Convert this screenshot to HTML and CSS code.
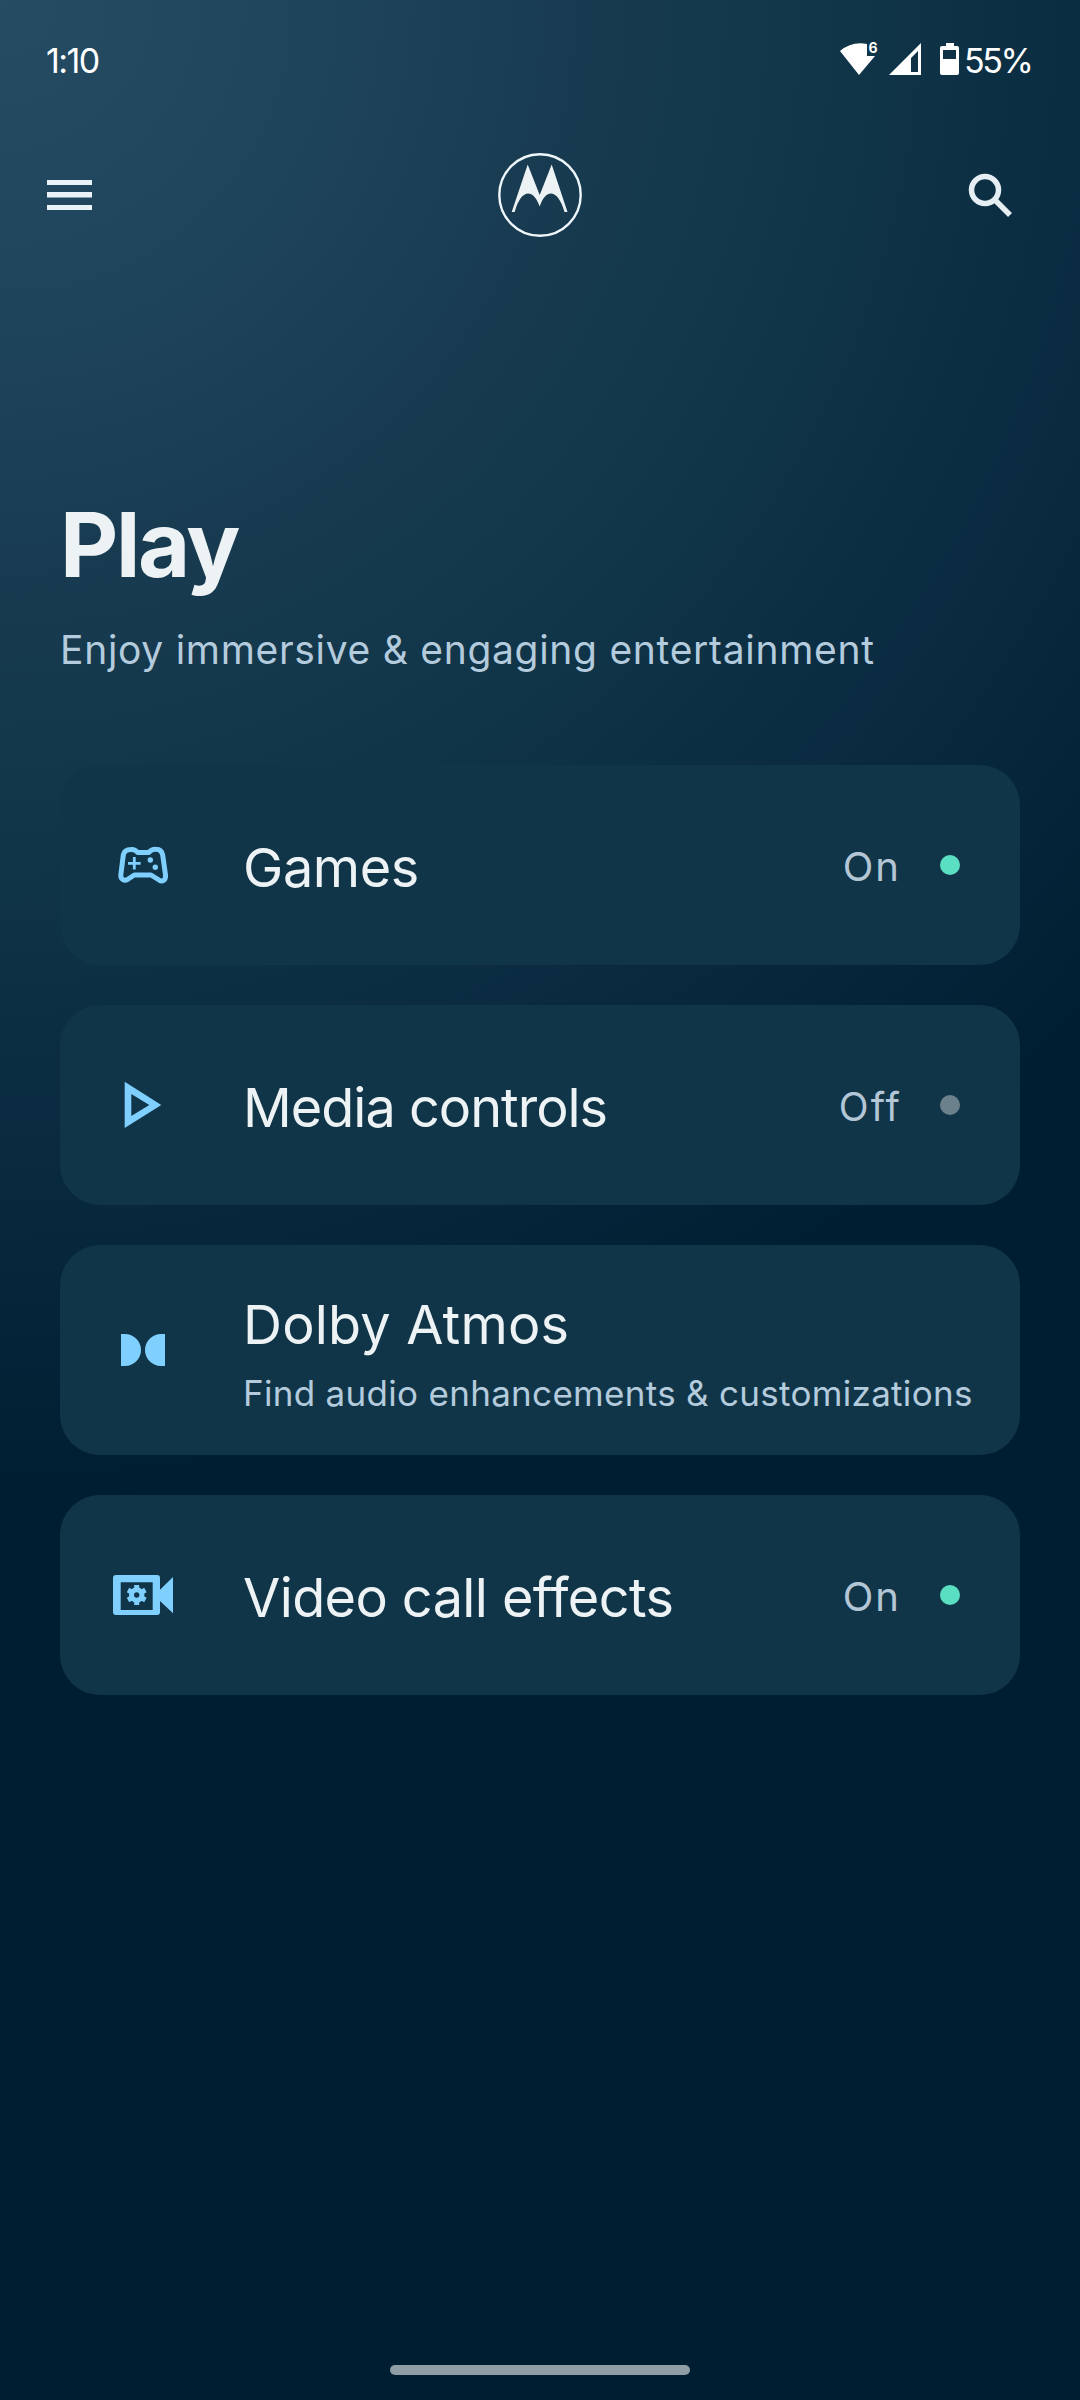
FILE: index.html
```html
<!DOCTYPE html>
<html lang="en">
<head>
<meta charset="utf-8">
<title>Play</title>
<link rel="stylesheet" href="styles.css">
</head>
<body>
<div class="screen">
  <header class="status">
    <span class="clock">1:10</span>
    <div class="status-right">
      <svg class="wifi" width="38" height="34" viewBox="0 0 38 34"><path fill="#fff" d="M0 8Q12-2 27 1V13H35L19 32Z"/><text class="wifi-gen" x="28.500" y="10">6</text></svg>
      <svg class="signal" width="32" height="32" viewBox="0 0 32 32"><path fill="#fff" fill-rule="evenodd" d="M0 32L32 0V32ZM22 15V29H29V8Z"/></svg>
      <svg class="battery" width="19" height="32" viewBox="0 0 19 32"><path fill="#fff" fill-rule="evenodd" d="M6 0H14V3H17Q19 3 19 5V30Q19 32 17 32H2Q0 32 0 30V5Q0 3 2 3H6ZM3 7V16H16V7Z"/></svg>
      <span class="percent">55%</span>
    </div>
  </header>
  <nav class="bar">
    <svg class="menu" width="46" height="32" viewBox="0 0 46 32"><path fill="#e9f2f6" d="M0 1H45V6H0ZM0 13H45V18.500H0ZM0 26H45V31H0Z"/></svg>
    <svg class="logo" width="84" height="84" viewBox="0 0 84 84"><circle cx="42" cy="42" r="40.700" fill="none" stroke="#edf7fc" stroke-width="2.400"/><path fill="#edf3f5" d="M29.700 11.500L41.700 42L53.700 11.500L69.500 59H66.500C60 36 48 35 41.700 53.500C35 35 23 36 16.700 59H13.700Z"/></svg>
    <svg class="search" width="46" height="46" viewBox="0 0 46 46"><circle cx="17" cy="17" r="13.500" fill="none" stroke="#e5eef3" stroke-width="5.500"/><path stroke="#e5eef3" stroke-width="5.500" d="M26.500 26.500L42 42"/></svg>
  </nav>
  <main class="content">
    <h1 class="title">Play</h1>
    <p class="subtitle">Enjoy immersive &amp; engaging entertainment</p>
    <section class="cards">
      <article class="card">
        <svg class="icon" width="70" height="60" viewBox="0 0 70 60"><path fill="none" stroke="#7fd0ff" stroke-width="5" stroke-linejoin="round" d="M23 14.500C26 14 28 15.500 29.700 17.500H40.700C43 15 45 14 48 14.300C52 14.500 54 16.500 54.700 20L57.500 40C58 45 54.500 47.500 51 45L43 40H26.300L19.500 44.500C16 46.500 12.500 44 12.800 40L15.300 20C16 16.500 19 14.500 23 14.500Z"/><path fill="none" stroke="#7fd0ff" stroke-width="2.800" d="M26.300 22V34.600M20 28.300H32.600"/><circle cx="42.300" cy="25" r="2.700" fill="#7fd0ff"/><circle cx="47.300" cy="32.300" r="2.700" fill="#7fd0ff"/></svg>
        <h2 class="name name-games">Games</h2>
        <span class="state state-on">On</span><i class="dot on"></i>
      </article>
      <article class="card">
        <svg class="icon" width="70" height="60" viewBox="0 0 70 60"><path fill="#7fd0ff" fill-rule="evenodd" d="M16.700 6.700L53.300 30L16.700 53ZM23.300 19V41L41.300 30Z"/></svg>
        <h2 class="name name-media">Media controls</h2>
        <span class="state">Off</span><i class="dot off"></i>
      </article>
      <article class="card tall">
        <svg class="icon" width="70" height="60" viewBox="0 0 70 60"><path fill="#7fd0ff" d="M13 14H17A16 16 0 0 1 17 46H13ZM57 14H53A16 16 0 0 0 53 46H57Z"/></svg>
        <div class="texts">
          <h2 class="name name-dolby">Dolby Atmos</h2>
          <p class="desc">Find audio enhancements &amp; customizations</p>
        </div>
      </article>
      <article class="card">
        <svg class="icon" width="70" height="60" viewBox="0 0 70 60"><path fill="#7fd0ff" fill-rule="evenodd" d="M8 10H49Q52 10 52 13V24.700L65 12V48.300L52 36V47Q52 50 49 50H8Q5 50 5 47V13Q5 10 8 10ZM12.700 17.300V45H44.700V17.300Z"/><g transform="translate(28.700 30)"><circle r="5.200" fill="none" stroke="#7fd0ff" stroke-width="5"/><path stroke="#7fd0ff" stroke-width="5" d="M0-10V-5M0 10V5M8.700-5L4.300-2.500M-8.700-5L-4.300-2.500M8.700 5L4.300 2.500M-8.700 5L-4.300 2.500"/></g></svg>
        <h2 class="name name-video">Video call effects</h2>
        <span class="state state-on">On</span><i class="dot on"></i>
      </article>
    </section>
  </main>
  <div class="handle"></div>
</div>
</body>
</html>
```
FILE: styles.css
```css
* { box-sizing: border-box; }
body { margin: 0; font-family: Inter, "Liberation Sans", sans-serif; background: #001e32; }
h1, h2, p { margin: 0; font-weight: 400; }
svg { display: block; flex: none; overflow: visible; }
.screen { width: 1080px; height: 2400px; display: flex; flex-direction: column; background: radial-gradient(circle 1500px at 0 0, #264c63 0, #1e445b 22%, #183b51 38%, #113548 56%, #0a2b41 74%, #001e32 100%); }
.status { height: 120px; padding: 43px 48px 0 46px; display: flex; justify-content: space-between; color: #fff; font-size: 34px; line-height: 36px; }
.clock { letter-spacing: -1.6px; }
.status-right { display: flex; }
.wifi { margin-right: 11px; }
.signal { margin-right: 19px; }
.battery { margin-right: 5px; }
.wifi-gen { font-size: 14px; font-weight: 700; fill: #fff; }
.percent { letter-spacing: -2.4px; width: 68px; white-space: nowrap; }
.bar { height: 150px; padding: 33px 66px 0 47px; display: grid; grid-template-columns: 451px 1fr 46px; }
.menu { margin-top: 26px; }
.search { margin-top: 20px; }
.content { padding: 0 60px; flex: 1; }
.title { height: 122px; margin-top: 214px; font-size: 90px; line-height: 122px; font-weight: 700; color: #edf3f4; letter-spacing: -2.4px; }
.subtitle { height: 60px; margin-top: 14px; font-size: 39px; line-height: 60px; letter-spacing: 0.7px; color: #b3cbdc; white-space: nowrap; }
.cards { display: flex; flex-direction: column; gap: 40px; margin-top: 85px; }
.card { height: 200px; border-radius: 40px; background: #113548; display: flex; align-items: center; padding: 0 60px 0 48px; }
.tall { height: 210px; padding-right: 0; }
.icon { margin-right: 65px; }
.name { flex: 1; font-size: 54px; line-height: 64px; color: #edf3f4; white-space: nowrap; padding-top: 5px; }
.name-games { letter-spacing: -0.4px; }
.name-media { letter-spacing: -1px; }
.name-dolby { padding-top: 0; letter-spacing: 0.2px; }
.name-video { letter-spacing: -0.6px; }
.state { font-size: 39px; letter-spacing: 2px; color: #b3c6d6; margin-right: 38px; padding-top: 3px; }
.state-on { font-size: 40px; margin-right: 39px; }
.dot { width: 20px; height: 20px; border-radius: 50%; }
.on { background: #5adfc2; }
.off { background: #6b818c; }
.texts { padding-top: 7px; }
.desc { font-size: 35px; line-height: 44px; letter-spacing: 0.3px; color: #b3cbdc; margin-top: 14px; white-space: nowrap; }
.handle { width: 300px; height: 10px; border-radius: 5px; background: #8f9da4; margin: 0 auto 25px; }
```
